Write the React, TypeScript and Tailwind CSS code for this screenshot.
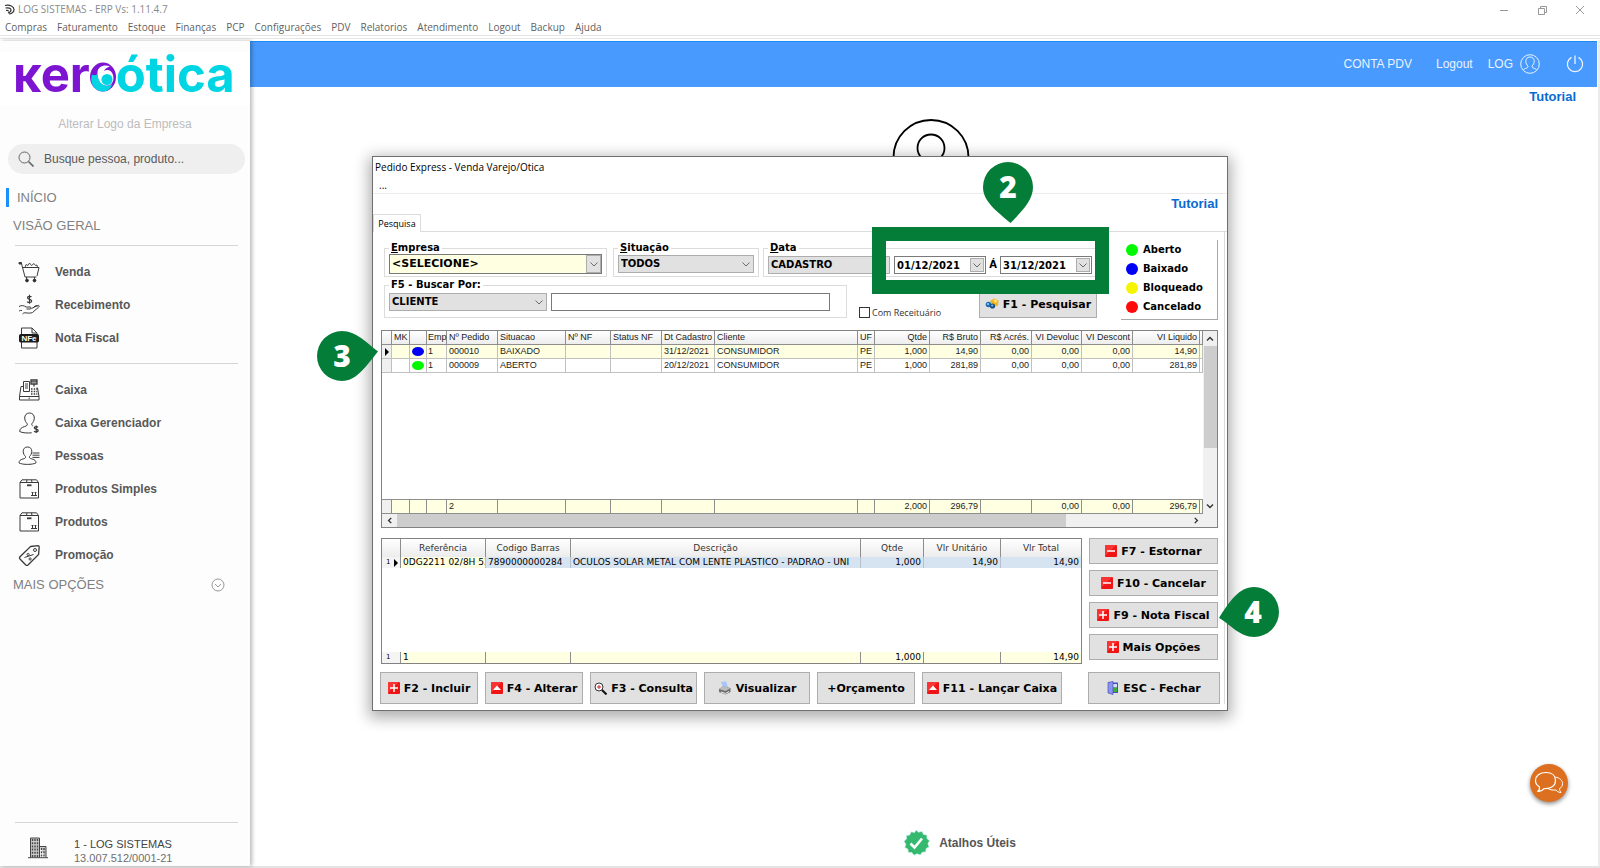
import React from "react";

const sans = "font-['Liberation_Sans',Arial,sans-serif]";
const ui = "font-['Open_Sans','Noto_Sans',sans-serif]";
const verdana = "font-['DejaVu_Sans',Verdana,sans-serif]";

const menuItems = [
  "Compras", "Faturamento", "Estoque", "Finanças", "PCP", "Configurações",
  "PDV", "Relatorios", "Atendimento", "Logout", "Backup", "Ajuda",
];

/* ---------- icons ---------- */

function Line({ children }: { children: React.ReactNode }) {
  return (
    <svg viewBox="0 0 22 22" className="size-[22px] shrink-0" fill="none" stroke="#3a3a3a" strokeWidth="1" aria-hidden="true">
      {children}
    </svg>
  );
}

const CartIcon = () => (
  <Line>
    <path d="M1 1.500h2.500v1.500H1z" fill="#3a3a3a" />
    <path d="M3.500 2.500l3.500 13.500h11.500M5 6.500h16l-2 8.500" />
    <path d="M7 6.500l1-3 2 1 1.500-2.500 2 2.500L16 2.500l1.500 2 1.500-.5.500 2.500" strokeWidth=".9" />
    <path d="M8.500 16v2.500M16.500 16v2.500" />
    <circle cx="9" cy="19.500" r="1.400" fill="#222" />
    <circle cx="16.500" cy="19.500" r="1.400" fill="#222" />
  </Line>
);

const HandIcon = () => (
  <Line>
    <path d="M13.500 3c-.6-.9-4-1.200-4 .8s4.200 1.200 4.200 3.200-3.700 1.800-4.400.6M11.500.8v9" strokeWidth="1.200" />
    <path d="M1 12.500c2.500-1.500 5-1 7 .5h4c1.500.2 1.500 2 0 2H8.500M13.500 14.500l6-3c1.400-.6 2.300.6 1.200 1.600L14.500 18.500c-2 1-4.500.5-6.500.4-1.600-.3-2.500 0-3.500 1M16 12.800l1.500-1c1-.6 2 .1 1.500 1M1 17c1-.5 2-.8 3-.5" />
  </Line>
);

const NfeIcon = () => (
  <Line>
    <path d="M3.500 7.500v-6.500h10.500l5 5v1.500M14 1v5h5M3.500 14v7h15.500v-7" />
    <rect x="1.500" y="7.500" width="19" height="7.500" rx="1" fill="#1c1c1c" stroke="#1c1c1c" />
    <text x="11" y="14" textAnchor="middle" fontSize="8" fontWeight="700" fontFamily="Liberation Sans, Arial, sans-serif" fill="#fff" stroke="none">NFe</text>
  </Line>
);

const RegisterIcon = () => (
  <Line>
    <path d="M1.500 17.500h19.500v3.500H1.500zM1.500 17.500l1.500-10h2.500M21 17.500l-1.500-8.500h-1M10.500 19.200h1.500" />
    <path d="M5.500 12.500V2.500h6v10zM7 5h3M7 7h3M7 9h3" />
    <path d="M13 1h6v4h-6zM16 5v2.500M13 2.800h6" strokeWidth="1.300" />
    <path d="M13 10h1.500M15.700 10h1.500M18.300 10h1M13 12.500h1.500M15.700 12.500h1.500M18.300 12.500h1M13 15h1.500M15.700 15h1.500M18.300 15h1" strokeWidth="1.300" />
  </Line>
);

const ManagerIcon = () => (
  <Line>
    <path d="M11.500 1c-3 0-4.800 2-4.800 5 0 2.800 1.500 4.500 2.500 5.800.5 1.500-.7 2.200-2.500 2.700-3.500 1-5 2.500-5 5 2.500 1.500 8 1.700 12 1.300M11.500 1c3 0 4.800 2 4.800 5 0 2.800-1.500 4.500-2.500 5.800-.2 1 .2 1.700 1 2.200" />
    <path d="M20 15.300c-.7-1-3.700-1-3.700.6s3.900 1 3.900 2.700-3.200 1.700-4.200.5M18.200 13.500v7.500" strokeWidth="1.200" />
  </Line>
);

const PeopleIcon = () => (
  <Line>
    <path d="M9.500 2c-2.800 0-4.300 1.800-4.300 4.300S6.500 10.500 7.500 11.500c.4 1.500-.7 2-2.300 2.400-3 .7-4.200 2-4.200 4 3.500 2 13.500 2 17 0 0-2-1.200-3.300-4.200-4-1.600-.4-2.700-.9-2.300-2.400 1-1 2.300-2.700 2.300-5.200S12.300 2 9.500 2z" />
    <path d="M14.500 8h7M14.500 10.200h7M14.500 12.400h7" />
  </Line>
);

const BoxIcon = () => (
  <Line>
    <path d="M2 4.500h18.500v15.500H2zM2 4.500L4 1.800h14.500l2 2.700M9 1.800L8.500 4.500M13.500 1.800l.5 2.700" />
    <path d="M9 7.300h4.500" strokeWidth="1.800" />
    <path d="M14.500 17.500v-3.500M17.500 17.500v-3.500M13 17.500h6M13.600 15l.9-1 .9 1M16.600 15l.9-1 .9 1" />
  </Line>
);

const TagIcon = () => (
  <Line>
    <path d="M12.500 2.500l7.500-.8c.8 0 1.200.4 1.200 1.200l-.6 7.600L10 21c-.8.700-1.400.7-2.200 0L2 15c-.7-.8-.7-1.400 0-2.200z" strokeWidth="1.300" />
    <circle cx="17" cy="6" r="1.500" />
    <path d="M6.500 13.500l9-3M9 10.500c0-1.500 2.200-1.500 2.200 0s-2.200 1.500-2.200 0zM11 15c0-1.500 2.200-1.500 2.200 0s-2.200 1.500-2.200 0z" />
  </Line>
);

const BuildingIcon = () => (
  <svg viewBox="0 0 22 22" className="size-[22px] shrink-0" fill="none" stroke="#444" strokeWidth="1" aria-hidden="true">
    <path d="M3.500 20.500v-19.500h9v19.500M12.500 9.500h6.500v11M1 20.700h20" fill="#ccc" />
    <path d="M5.500 2v18M8 2v18M10.500 2v18M14.500 11v9M17 11v9" strokeDasharray="2 1.200" strokeWidth="1.400" />
  </svg>
);

function RedIcon({ kind }: { kind: "plus" | "minus" | "up" }) {
  return (
    <svg viewBox="0 0 12 12" className="size-[12px] shrink-0" aria-hidden="true">
      <rect width="12" height="12" rx="1" fill="#f01414" />
      <path d="M0 11L11 0H1L0 1z" fill="#ff4a4a" opacity=".6" />
      {kind === "up" ? (
        <path d="M6 3.500l4 4.500H2z" fill="#fff" />
      ) : (
        <path d={kind === "plus" ? "M2 6h8M6 2v8" : "M2 6h8"} stroke="#fff" strokeWidth="1.500" />
      )}
    </svg>
  );
}

const ZoomIcon = () => (
  <svg viewBox="0 0 13 13" className="size-[13px] shrink-0" fill="none" aria-hidden="true">
    <circle cx="5" cy="5" r="4" fill="#fff" stroke="#333" />
    <path d="M5 3v4M3 5h4" stroke="#d22" />
    <path d="M8 8l4.500 4.500" stroke="#111" strokeWidth="2" />
  </svg>
);

const PrinterIcon = () => (
  <svg viewBox="0 0 14 14" className="size-[14px] shrink-0" aria-hidden="true">
    <path d="M3 1l5-.8 2 5.800-4.500 1z" fill="#a9c3fb" />
    <path d="M1 8l4-2.500 7.500 1.500v4L7.500 13.500 1 11z" fill="#707070" />
    <path d="M1 8l4-2.500 7.500 1.500-5 3z" fill="#bdbdbd" />
    <path d="M3 11l4.500 1.500 3.500-2" stroke="#eee" fill="none" />
  </svg>
);

const DoorIcon = () => (
  <svg viewBox="0 0 12 14" className="h-[14px] w-[12px] shrink-0" aria-hidden="true">
    <path d="M1 1.500h10v10.500H1z" fill="#4a4fc4" />
    <path d="M6 3h4v3.500H6z" fill="#cfe0ff" />
    <path d="M6 6.500h4V11H6z" fill="#3cae3c" />
    <path d="M1 1.500L6 .5V13.500L1 12z" fill="#8d93ee" stroke="#3a3fa8" strokeWidth=".6" />
  </svg>
);

const SearchColorIcon = () => (
  <svg viewBox="0 0 14 12" className="h-[12px] w-[14px] shrink-0" aria-hidden="true">
    <path d="M5 3l4-2.500 4.500 2-.5 5-4 1.500z" fill="#f3b31a" />
    <path d="M8 2l3-.5 1.500 2-2 1.500z" fill="#ffe27a" />
    <circle cx="3.500" cy="6.500" r="2.800" fill="#1d6fb5" />
    <circle cx="7.500" cy="8" r="2.600" fill="#174f86" />
    <circle cx="3" cy="6" r="1" fill="#9fd2f5" />
    <circle cx="7.200" cy="7.600" r="1" fill="#7fc0ee" />
  </svg>
);

function Chevron() {
  return (
    <svg viewBox="0 0 8 5" className="h-[5px] w-[8px]" fill="none" stroke="#6b6b6b" aria-hidden="true">
      <path d="M.5.5L4 4 7.500.5" />
    </svg>
  );
}

const RowMarker = () => (
  <svg viewBox="0 0 4 8" className="mx-auto h-[8px] w-[4px]" aria-hidden="true">
    <path d="M0 0l4 4-4 4z" fill="#000" />
  </svg>
);

/* ---------- sidebar ---------- */

const groupOne = [
  { label: "Venda", icon: <CartIcon /> },
  { label: "Recebimento", icon: <HandIcon /> },
  { label: "Nota Fiscal", icon: <NfeIcon /> },
];
const groupTwo = [
  { label: "Caixa", icon: <RegisterIcon /> },
  { label: "Caixa Gerenciador", icon: <ManagerIcon /> },
  { label: "Pessoas", icon: <PeopleIcon /> },
  { label: "Produtos Simples", icon: <BoxIcon /> },
  { label: "Produtos", icon: <BoxIcon /> },
  { label: "Promoção", icon: <TagIcon /> },
];

function NavGroup({ items }: { items: { label: string; icon: React.ReactNode }[] }) {
  return (
    <ul className="py-[9px] pl-[18px]">
      {items.map((item) => (
        <li key={item.label}>
          <a href="#" className="flex h-[33px] items-center gap-[15px] text-[12px] font-bold text-[#585858]">
            {item.icon}
            {item.label}
          </a>
        </li>
      ))}
    </ul>
  );
}

function Sidebar() {
  return (
    <aside className="z-10 flex w-[250px] shrink-0 flex-col bg-[#fdfdfd] pt-[11px] shadow-[2px_0_4px_rgba(0,0,0,0.28)]">
      <div className="flex h-[53px] items-start bg-white pl-[13px] font-['Inter',sans-serif] text-[49px] leading-[46px] font-bold" role="img" aria-label="kero ótica">
        <span className="text-[#7d14d2]">ĸer</span>
        <svg viewBox="0 0 26 30" className="mt-[10px] h-[30px] w-[26px] shrink-0" aria-hidden="true">
          <ellipse cx="13" cy="15" rx="13" ry="14.500" fill="#7d14d2" />
          <path d="M20 4.500C14 2 8 5 7.500 10c-.3 3 0 6 1.500 9 2 4 7 6 11 4 4.500-2.500 4.500-10 1-13.500-2-2-5-2-7-.5 1-2 3-3.800 6-4.500z" fill="#fff" />
          <path d="M2 12.500c1.500 1 3.500 1 5.500-.5.500 6 3 10.500 8 11.500 2.500.5 5 0 7-1.500-1.500 4-4.500 7.500-9.500 7.500C5 29.500-1 21.500 2 12.500z" fill="#00d5e3" />
          <circle cx="17" cy="17.500" r="5.500" fill="#00d5e3" />
        </svg>
        <span className="text-[#00d5e3]">ótica</span>
      </div>
      <a href="#" className="flex h-[38px] items-center justify-center text-[12px] text-[#bcbcbc]">Alterar Logo da Empresa</a>
      <label className="mr-[5px] ml-[8px] mt-[1px] flex h-[30px] items-center gap-[10px] rounded-full bg-[#efefef] pl-[10px]">
        <svg viewBox="0 0 16 16" className="size-[16px] shrink-0" fill="none" stroke="#666" aria-hidden="true">
          <circle cx="6.500" cy="6.500" r="5.500" />
          <path d="M10.500 10.500l5 5" strokeWidth="1.600" />
        </svg>
        <input aria-label="Busque pessoa, produto" placeholder="Busque pessoa, produto..." className="min-w-0 flex-1 bg-transparent text-[12px] text-[#5a5a5a] outline-none placeholder:text-[#5a5a5a]" />
      </label>
      <a href="#" className="mt-[14px] ml-[6px] flex h-[19px] items-center border-l-[3px] border-[#1a90ff] pl-[8px] text-[13px] text-[#808080]">INÍCIO</a>
      <h2 className="mt-[7px] flex h-[24px] items-center pl-[13px] text-[13px] text-[#808080]">VISÃO GERAL</h2>
      <hr className="mr-[12px] ml-[15px] mt-[7px] border-[#d6d6d6]" />
      <NavGroup items={groupOne} />
      <hr className="mr-[12px] ml-[15px] border-[#d6d6d6]" />
      <NavGroup items={groupTwo} />
      <button type="button" className="-mt-[7px] flex h-[24px] items-center justify-between pr-[25px] pl-[13px] text-[13px] text-[#808080]">
        MAIS OPÇÕES
        <svg viewBox="0 0 14 14" className="size-[14px]" fill="none" stroke="#999" aria-hidden="true">
          <circle cx="7" cy="7" r="6" />
          <path d="M4 6l3 3 3-3" />
        </svg>
      </button>
      <div className="mt-auto">
        <hr className="mr-[12px] ml-[15px] border-[#d6d6d6]" />
        <div className="flex h-[43px] items-start gap-[25px] pt-[14px] pl-[27px]">
          <BuildingIcon />
          <p className="text-[11px] leading-[14px] text-[#6e6e6e]">
            <span className="block text-[#444]">1 - LOG SISTEMAS</span>
            13.007.512/0001-21
          </p>
        </div>
      </div>
    </aside>
  );
}

/* ---------- window controls ---------- */

function Combo({ id, value, className, yellow = false }: { id: string; value: string; className: string; yellow?: boolean }) {
  return (
    <div className={`relative ${className}`}>
      <select
        id={id}
        className={
          yellow
            ? "block h-full w-full appearance-none border border-[#7a7a7a] bg-[#ffffe1] px-[2px] pb-[1px] text-[11px] leading-none font-bold text-black"
            : "block h-full w-full appearance-none border border-[#adadad] bg-[#e1e1e1] px-[2px] text-[10px] leading-none font-bold text-black"
        }
      >
        <option>{value}</option>
      </select>
      {yellow ? (
        <span className="pointer-events-none absolute inset-y-[1px] right-[1px] flex w-[15px] items-center justify-center border border-[#adadad] bg-[#e1e1e1]">
          <Chevron />
        </span>
      ) : (
        <span className="pointer-events-none absolute inset-y-0 right-[4px] flex items-center">
          <Chevron />
        </span>
      )}
    </div>
  );
}

function Group({ id, title, className, children }: { id: string; title: React.ReactNode; className: string; children: React.ReactNode }) {
  return (
    <fieldset className={`border border-[#dcdcdc] px-[4px] ${className}`}>
      <legend className="px-[2px] text-[10px] leading-[12px] font-bold">
        <label htmlFor={id}>{title}</label>
      </legend>
      {children}
    </fieldset>
  );
}

function DateBox({ value, label }: { value: string; label: string }) {
  return (
    <div className="flex h-[18px] w-[92px] items-center border border-[#7a7a7a] bg-white pr-[1px]">
      <input aria-label={label} defaultValue={value} className="min-w-0 flex-1 pl-[2px] text-[10px] leading-none font-bold outline-none" />
      <button type="button" aria-label={`Abrir calendário ${label}`} className="flex h-[14px] w-[14px] items-center justify-center border border-[#adadad] bg-[#e1e1e1]">
        <Chevron />
      </button>
    </div>
  );
}

function Btn({ icon, className, children }: { icon?: React.ReactNode; className: string; children: React.ReactNode }) {
  return (
    <button type="button" className={`flex items-center justify-center gap-[4px] border border-[#adadad] bg-[#e1e1e1] text-[11px] leading-none font-bold whitespace-nowrap text-black ${className}`}>
      {icon}
      {children}
    </button>
  );
}

/* ---------- orders grid ---------- */

const orderCols = [
  { h: "", w: "w-[10px]" }, { h: "MK", w: "w-[18px]" }, { h: "", w: "w-[17px]" },
  { h: "Emp", w: "w-[20px]" }, { h: "Nº Pedido", w: "w-[51px]" }, { h: "Situacao", w: "w-[68px]" },
  { h: "Nº NF", w: "w-[45px]" }, { h: "Status NF", w: "w-[51px]" }, { h: "Dt Cadastro", w: "w-[53px]" },
  { h: "Cliente", w: "" }, { h: "UF", w: "w-[17px]" }, { h: "Qtde", w: "w-[55px]", r: true },
  { h: "R$ Bruto", w: "w-[51px]", r: true }, { h: "R$ Acrés.", w: "w-[51px]", r: true },
  { h: "VI Devoluc", w: "w-[50px]", r: true }, { h: "VI Descont", w: "w-[51px]", r: true },
  { h: "VI Liquido", w: "w-[67px]", r: true }, { h: "", w: "w-[3px]" },
];

const orders = [
  ["", "", "blue", "1", "000010", "BAIXADO", "", "", "31/12/2021", "CONSUMIDOR", "PE", "1,000", "14,90", "0,00", "0,00", "0,00", "14,90", ""],
  ["", "", "green", "1", "000009", "ABERTO", "", "", "20/12/2021", "CONSUMIDOR", "PE", "1,000", "281,89", "0,00", "0,00", "0,00", "281,89", ""],
];
const orderTotals = ["", "", "", "", "2", "", "", "", "", "", "", "2,000", "296,79", "", "0,00", "0,00", "296,79", ""];

function cellPad(i: number) {
  if (i === 0 || i === 17) return "px-0";
  if (i === 3) return "pr-0 pl-[1px]";
  return "pr-[2px] pl-[2px]";
}

function OrdersGrid() {
  return (
    <div className={`${sans} ml-[8px] mr-[6px] mt-[10px] border border-[#828282] bg-white text-[9px] text-[#1c1c1c]`}>
      <div className="flex">
        <div className="min-w-0 flex-1">
          <table className="w-full table-fixed border-separate border-spacing-0 leading-[13px]">
            <colgroup>
              {orderCols.map((c, i) => <col key={i} className={c.w} />)}
            </colgroup>
            <thead>
              <tr className="h-[14px] bg-linear-to-b from-white to-[#ececec]">
                {orderCols.map((c, i) => (
                  <th key={i} className={`border-r border-b border-[#8e8e8e] py-0 font-normal whitespace-nowrap ${cellPad(i)} ${c.r ? "text-right" : "text-left"}`}>{c.h}</th>
                ))}
              </tr>
            </thead>
            <tbody>
              {orders.map((row, r) => (
                <tr key={r} className={r === 0 ? "h-[14px] bg-[#ffffe1]" : "h-[14px] bg-white"}>
                  {row.map((v, i) => (
                    <td key={i} className={`border-r border-b border-[#c0c0c0] py-0 whitespace-nowrap ${i === 0 ? "bg-[#f0f0f0]" : ""} ${cellPad(i)} ${orderCols[i].r ? "text-right" : "text-left"}`}>
                      {i === 2 ? (
                        <span className={`block h-[9px] w-[12px] rounded-[50%] ${v === "blue" ? "bg-[#0000f5]" : "bg-[#00f900]"}`} />
                      ) : i === 0 && r === 0 ? <RowMarker /> : v}
                    </td>
                  ))}
                </tr>
              ))}
              <tr className="h-[126px]"><td colSpan={18} /></tr>
            </tbody>
            <tfoot>
              <tr className="h-[15px] bg-[#ffffe1]">
                {orderTotals.map((v, i) => (
                  <td key={i} className={`border-t border-r border-b border-[#8e8e8e] py-0 ${i === 0 ? "bg-[#f0f0f0]" : ""} ${cellPad(i)} ${orderCols[i].r ? "text-right" : "text-left"}`}>{v}</td>
                ))}
              </tr>
            </tfoot>
          </table>
        </div>
        <div className="flex w-[14px] flex-col items-center bg-[#f0f0f0]">
          <svg viewBox="0 0 8 5" className="my-[5px] h-[5px] w-[8px]" fill="none" stroke="#333" strokeWidth="1.400" aria-hidden="true"><path d="M1 4.500l3-3 3 3" /></svg>
          <div className="h-[102px] w-[13px] bg-[#cdcdcd]" />
          <svg viewBox="0 0 8 5" className="mt-auto mb-[5px] h-[5px] w-[8px]" fill="none" stroke="#333" strokeWidth="1.400" aria-hidden="true"><path d="M1 .5l3 3 3-3" /></svg>
        </div>
      </div>
      <div className="flex h-[13px] items-center bg-[#f0f0f0] pr-[18px]">
        <svg viewBox="0 0 5 8" className="mx-[5px] h-[7px] w-[5px]" fill="none" stroke="#333" strokeWidth="1.600" aria-hidden="true"><path d="M4.500 1l-3 3 3 3" /></svg>
        <div className="flex h-full flex-1">
          <div className="h-[13px] w-[84%] bg-[#cdcdcd]" />
        </div>
        <svg viewBox="0 0 5 8" className="h-[7px] w-[5px]" fill="none" stroke="#333" strokeWidth="1.600" aria-hidden="true"><path d="M.5 1l3 3-3 3" /></svg>
      </div>
    </div>
  );
}

/* ---------- items grid ---------- */

const itemCols = [
  { h: "", w: "w-[19px]" }, { h: "Referência", w: "w-[85px]" }, { h: "Codigo Barras", w: "w-[85px]" },
  { h: "Descrição", w: "" }, { h: "Qtde", w: "w-[63px]", r: true },
  { h: "Vlr Unitário", w: "w-[77px]", r: true }, { h: "Vlr Total", w: "w-[80px]", r: true },
];
const itemRow = ["1", "0DG2211 02/8H 53", "7890000000284", "OCULOS SOLAR METAL COM LENTE PLASTICO - PADRAO - UNI", "1,000", "14,90", "14,90"];
const itemTotals = ["1", "1", "", "", "1,000", "", "14,90"];

function itemCellColor(i: number) {
  if (i === 0) return "border-[#8e8e8e] bg-[#f4f4f4] px-[2px]";
  if (i === 1) return "border-[#c0c0c0] bg-[#ffffe1] pr-0 pl-[2px]";
  return "border-[#b4c0cc] bg-[#d6e4f2] px-[2px]";
}

function ItemsGrid() {
  return (
    <div className="min-w-0 flex-1 border border-[#828282] bg-white text-[9px] leading-[11px] text-black">
      <table className="w-full table-fixed border-separate border-spacing-0">
        <colgroup>
          {itemCols.map((c, i) => <col key={i} className={c.w} />)}
        </colgroup>
        <thead>
          <tr className="h-[18px] bg-linear-to-b from-white to-[#ececec]">
            {itemCols.map((c, i) => (
              <th key={i} className="border-r border-[#8e8e8e] p-0 font-normal text-[#333] last:border-r-0">{c.h}</th>
            ))}
          </tr>
        </thead>
        <tbody>
          <tr className="h-[11px]">
            {itemRow.map((v, i) => (
              <td key={i} className={`overflow-hidden border-r py-0 whitespace-nowrap last:border-r-0 ${itemCellColor(i)} ${itemCols[i].r ? "text-right" : "text-left"}`}>
                {i === 0 ? (
                  <span className="flex items-center gap-[3px] pl-[2px] text-[7px]">
                    {v}
                    <RowMarker />
                  </span>
                ) : v}
              </td>
            ))}
          </tr>
          <tr className="h-[84px]"><td colSpan={7} /></tr>
        </tbody>
        <tfoot>
          <tr className="h-[11px] bg-[#ffffe1]">
            {itemTotals.map((v, i) => (
              <td key={i} className={`border-r border-[#8e8e8e] py-0 last:border-r-0 ${i === 0 ? "bg-[#f4f4f4] pl-[4px] text-[7px]" : "px-[2px]"} ${itemCols[i].r ? "text-right" : "text-left"}`}>{v}</td>
            ))}
          </tr>
        </tfoot>
      </table>
    </div>
  );
}

/* ---------- callouts ---------- */

function Pin({ n, className, path, box, textX, textY }: { n: string; className: string; path: string; box: string; textX: number; textY: number }) {
  return (
    <svg viewBox={box} className={`absolute z-20 ${className}`} aria-hidden="true">
      <path d={path} fill="#047d38" />
      <text x={textX} y={textY} textAnchor="middle" fontFamily="Open Sans, sans-serif" fontWeight="800" fontSize="30" fill="#fff">{n}</text>
    </svg>
  );
}

/* ---------- dialog ---------- */

const statuses = [
  { label: "Aberto", c: "bg-[#00f900]" },
  { label: "Baixado", c: "bg-[#0000f5]" },
  { label: "Bloqueado", c: "bg-[#f5f500]" },
  { label: "Cancelado", c: "bg-[#ff0a0a]" },
];

function OrderDialog() {
  return (
    <section className={`${verdana} absolute top-[156px] left-1/2 z-20 w-[856px] -translate-x-1/2 border border-[#6f6f6f] bg-white pb-[6px] text-black shadow-[0_4px_14px_3px_rgba(0,0,0,0.32)]`} role="dialog" aria-label="Pedido Express">
      <h1 className={`${ui} h-[20px] pl-[2px] text-[10px] leading-[20px]`}>Pedido Express - Venda Varejo/Otica</h1>
      <div className={`${ui} h-[17px] border-b border-[#ebebeb] pl-[6px] text-[10px] leading-[17px]`}>...</div>
      <div className={`${sans} flex h-[20px] items-start justify-end pr-[9px]`}>
        <a href="#" className="mt-[2px] text-[13px] leading-[16px] font-bold text-[#0a6ad0]">Tutorial</a>
      </div>
      <div className="flex h-[18px] border-b border-[#dcdcdc]">
        <button type="button" className={`${ui} -mb-px h-[18px] w-[48px] border border-b-0 border-[#dcdcdc] bg-white text-[9px] leading-none`}>Pesquisa</button>
      </div>
      <div className="mr-[2px] border-r border-[#dcdcdc]">
        <div className="flex justify-between pr-[6px] pt-[8px] pl-[11px]">
          <div className="flex w-[724px] flex-col">
            <div className="flex h-[37px] pt-[2px]">
              <Group id="empresa" title={<><u>E</u>mpresa</>} className="mr-[6px] w-[223px]">
                <Combo id="empresa" value="<SELECIONE>" className="h-[20px]" yellow />
              </Group>
              <Group id="situacao" title={<><u>S</u>ituação</>} className="mr-[4px] w-[146px]">
                <div className="pt-[1px]">
                  <Combo id="situacao" value="TODOS" className="h-[18px]" />
                </div>
              </Group>
              <Group id="data" title={<><u>D</u>ata</>} className="flex-1">
                <div className="flex items-center pt-[2px]">
                  <Combo id="data" value="CADASTRO" className="h-[18px] w-[122px]" />
                  <div className="ml-[4px] flex items-center">
                    <DateBox value="01/12/2021" label="Data inicial" />
                    <span className="w-[14px] text-center text-[10px] leading-none font-bold">Á</span>
                    <DateBox value="31/12/2021" label="Data final" />
                  </div>
                </div>
              </Group>
            </div>
            <div className="flex h-[41px] items-end">
              <Group id="buscar" title="F5 - Buscar Por:" className="h-[39px] w-[463px]">
                <div className="flex gap-[4px] pt-[2px]">
                  <Combo id="buscar" value="CLIENTE" className="h-[18px] w-[158px]" />
                  <input aria-label="Texto da busca" className="h-[18px] w-[279px] border border-[#7a7a7a] px-[2px] text-[10px] font-bold" />
                </div>
              </Group>
              <label className={`${ui} ml-[12px] flex items-center gap-[2px] text-[9px] leading-[11px] text-[#333]`}>
                <input type="checkbox" className="size-[11px] appearance-none border border-[#333] bg-white" />
                Com Receituário
              </label>
              <Btn icon={<SearchColorIcon />} className="mr-[11px] ml-auto h-[34px] w-[118px] pt-[6px]">F1 - Pesquisar</Btn>
            </div>
          </div>
          <ul className="flex h-[80px] w-[97px] flex-col justify-between border-r border-b border-[#a8a8a8] pt-[3px] pb-[5px] pl-[5px] text-[10px] leading-[12px] font-bold">
            {statuses.map((s) => (
              <li key={s.label} className="flex h-[14px] items-center gap-[5px]">
                <span className={`size-[12px] rounded-full ${s.c}`} />
                {s.label}
              </li>
            ))}
          </ul>
        </div>
        <OrdersGrid />
        <div className="mt-[10px] flex items-start gap-[7px] pr-[6px] pl-[8px]">
          <ItemsGrid />
          <div className="flex w-[129px] flex-col gap-[6px]">
            <Btn icon={<RedIcon kind="minus" />} className="h-[26px]">F7 - Estornar</Btn>
            <Btn icon={<RedIcon kind="minus" />} className="h-[26px]">F10 - Cancelar</Btn>
            <Btn icon={<RedIcon kind="plus" />} className="h-[26px]">F9 - Nota Fiscal</Btn>
            <Btn icon={<RedIcon kind="plus" />} className="h-[26px]">Mais Opções</Btn>
          </div>
        </div>
        <div className="mt-[8px] flex gap-[7px] pr-[4px] pl-[7px]">
          <Btn icon={<RedIcon kind="plus" />} className="h-[32px] w-[98px]">F2 - Incluir</Btn>
          <Btn icon={<RedIcon kind="up" />} className="h-[32px] w-[98px]">F4 - Alterar</Btn>
          <Btn icon={<ZoomIcon />} className="h-[32px] w-[107px]">F3 - Consulta</Btn>
          <Btn icon={<PrinterIcon />} className="h-[32px] w-[106px]">Visualizar</Btn>
          <Btn className="h-[32px] w-[98px]">+Orçamento</Btn>
          <Btn icon={<RedIcon kind="up" />} className="h-[32px] w-[140px]">F11 - Lançar Caixa</Btn>
          <Btn icon={<DoorIcon />} className="ml-auto h-[32px] w-[132px]">ESC - Fechar</Btn>
        </div>
      </div>

      <div className="absolute top-[70px] left-[499px] h-[67px] w-[237px] border-[14px] border-[#047d38]" />
      <Pin n="2" box="0 0 50 61" className="top-[5px] left-[610px] h-[61px] w-[50px]" textX={25} textY={36}
        path="M25 0A25 25 0 0 1 50 25C50 39 38 50 27.500 61C15 50 0 40 0 25A25 25 0 0 1 25 0z" />
      <Pin n="3" box="0 0 61 50" className="top-[174px] -left-[56px] h-[50px] w-[61px]" textX={25} textY={36}
        path="M25 0C39 0 50 12 61 20.500C50 34 40 50 25 50A25 25 0 0 1 25 0z" />
      <Pin n="4" box="0 0 60 50" className="top-[430px] left-[846px] h-[50px] w-[60px]" textX={34} textY={36}
        path="M35 0A25 25 0 0 1 35 50C21 50 12 38 0 31C10 15 20 0 35 0z" />
    </section>
  );
}

/* ---------- app ---------- */

export default function App() {
  return (
    <div className={`${sans} relative flex min-h-screen flex-col overflow-hidden bg-white`}>
      <header className={`${ui} text-[10px]`}>
        <div className="flex h-[19px] items-center justify-between pr-[15px] pl-[4px] text-[#8a8a8a]">
          <div className="flex items-center gap-[3px]">
            <svg viewBox="0 0 11 11" className="size-[11px]" fill="none" stroke="#333" strokeWidth="1.200" aria-hidden="true">
              <path d="M1 1.500c5-1 9 1 9 4 0 2-2 4-5 4.500M1.500 4c3-.5 5.500 0 5.500 2 0 1.500-1.500 2.500-3 3M2 6.500c1.500-.3 2.500 0 2.500 1" />
            </svg>
            LOG SISTEMAS - ERP Vs: 1.11.4.7
          </div>
          <div className="flex items-center gap-[28px]">
            <button type="button" aria-label="Minimizar">
              <svg viewBox="0 0 10 10" className="size-[10px]" stroke="#999" aria-hidden="true"><path d="M1 5.500h8" /></svg>
            </button>
            <button type="button" aria-label="Restaurar">
              <svg viewBox="0 0 10 10" className="size-[10px]" fill="none" stroke="#999" aria-hidden="true"><path d="M1.500 3.500h6v6h-6zM3.500 3.500v-2h6v6h-2" /></svg>
            </button>
            <button type="button" aria-label="Fechar">
              <svg viewBox="0 0 10 10" className="size-[10px]" stroke="#999" aria-hidden="true"><path d="M1 1l8 8M9 1l-8 8" /></svg>
            </button>
          </div>
        </div>
        <nav className="flex h-[16px] items-center gap-[10px] pl-[5px] text-[#5f5f5f]">
          {menuItems.map((m) => <a key={m} href="#">{m}</a>)}
        </nav>
        <div className="mb-[2px] h-[4px] border-y border-[#e6e6e6]" />
      </header>
      <main className="flex flex-1 border-r-2 border-[#ebebeb]">
        <Sidebar />
        <div className="flex min-w-0 flex-1 flex-col pr-[1px]">
          <div className="flex h-[46px] items-center justify-end border-t border-[#1f8bf0] bg-[#489aff] pr-[13px] pb-[1px] text-[12px] text-[#eaf3ff]">
            <a href="#" className="mr-[24px]">CONTA PDV</a>
            <a href="#" className="mr-[15px]">Logout</a>
            <a href="#" className="mr-[26px] flex items-center gap-[7px]">
              LOG
              <svg viewBox="0 0 20 20" className="size-[20px]" fill="none" stroke="#eaf3ff" aria-hidden="true">
                <circle cx="10" cy="10" r="9.300" />
                <path d="M10 3c-2.600 0-4.200 1.700-4.200 4.200 0 2 1 3.800 2.200 4.800.3 1.500-1 2-2.200 2.400-1.300.5-2 1-2.500 1.700M10 3c2.600 0 4.200 1.700 4.200 4.200 0 2-1 3.800-2.200 4.800-.3 1.500 1 2 2.200 2.400 1.300.5 2 1 2.500 1.700" />
              </svg>
            </a>
            <button type="button" aria-label="Sair">
              <svg viewBox="0 0 18 18" className="size-[18px]" fill="none" stroke="#eaf3ff" strokeWidth="1.300" aria-hidden="true">
                <path d="M5.500 2.300a7.600 7.600 0 1 0 7 0M9 .5v8.500" />
              </svg>
            </button>
          </div>
          <a href="#" className="mt-[2px] mr-[21px] self-end text-[13px] leading-[16px] font-bold text-[#0a6ad0]">Tutorial</a>
          <svg viewBox="0 0 80 78" className="mt-[14px] ml-[15px] h-[78px] w-[80px] self-center" fill="none" stroke="#000" strokeWidth="1.800" aria-hidden="true">
            <circle cx="40" cy="38.500" r="37.500" />
            <circle cx="40" cy="29" r="13.500" />
            <path d="M16 65c2-14 12-20 24-20s22 6 24 20" />
          </svg>
          <button type="button" className="mt-auto mr-[29px] flex size-[38px] items-center justify-center self-end rounded-full bg-[#dc7020] shadow-[0_2px_4px_rgba(0,0,0,0.45)]" aria-label="Chat">
            <svg viewBox="0 0 30 24" className="h-[24px] w-[30px]" fill="none" stroke="#fff" strokeWidth="1.200" aria-hidden="true">
              <path d="M12 1.500C5.500 1.500 1.500 5 1.500 9.500c0 3 1.500 5 4 6.500.3 2-.5 3.300-1.500 4.500 3 0 4.700-1.200 6-3 7.500.5 11.500-3 11.500-8S18 1.500 12 1.500z" />
              <path d="M21.500 6c4.500 1 7 3.500 7 6.500 0 2.500-1 4-3 5 0 1.700.7 2.800 1.500 4-2.500 0-4-1-5-2.500-4 .3-6.500-.3-8.500-1.700" strokeWidth="1" />
            </svg>
          </button>
          <a href="#" className="mt-[27px] mb-[9px] ml-[71px] flex h-[28px] items-center gap-[9px] self-center text-[12px] font-bold text-[#555]">
            <svg viewBox="0 0 28 28" className="size-[28px]" aria-hidden="true">
              <path d="M14 1l2.600 2.200L20 2.300l1.500 3.100 3.400.6v3.400l2.600 2.300-1.600 3 1.200 3.200-3 1.600-.4 3.400-3.400.3-2 2.800-3.300-1.200L12 26.300l-2.200-2.700-3.400-.1-.6-3.400-3-1.600 1-3.300L2 12.300l2.500-2.300-.1-3.400 3.300-.7L9.200 2.800l3.300.8z" fill="#35b96e" stroke="#d5f5f8" strokeWidth=".6" />
              <path d="M8.500 14.500l4 4L20 9.500" fill="none" stroke="#fff" strokeWidth="2.600" />
            </svg>
            Atalhos Úteis
          </a>
        </div>
      </main>
      <div className="h-[2px] bg-[#e4e4e4]" />
      <OrderDialog />
    </div>
  );
}
